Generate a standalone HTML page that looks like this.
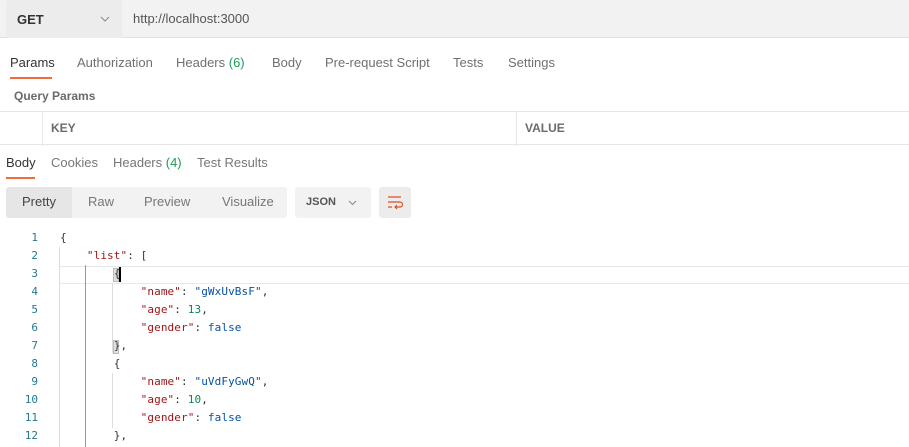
<!DOCTYPE html>
<html><head><meta charset="utf-8"><style>
*{margin:0;padding:0;box-sizing:border-box}
body{width:909px;height:447px;overflow:hidden;background:#fff;font-family:"Liberation Sans",sans-serif;font-size:13px;color:#6b6b6b;position:relative}
.a{position:absolute;white-space:nowrap}
.top{left:0;top:0;width:909px;height:38px;background:#f2f2f2;border-bottom:1px solid #e2e2e2}
.meth{left:6px;top:0;width:116px;height:38px;background:#ececec;border-radius:3px 0 0 3px}
.tab{top:55px;font-size:13px;color:#707070}
.code{font-family:"DejaVu Sans Mono","Liberation Mono",monospace;font-size:11px;line-height:18px;letter-spacing:0.1px}
.k{color:#a31515}.n{color:#098658}.b{color:#0451a5}
.ln{color:#237893;text-align:right;width:38px;left:0;letter-spacing:0}
</style></head><body>
<div class="a top"></div>
<div class="a meth"></div>
<div class="a" style="left:17px;top:12px;font-weight:bold;color:#333;font-size:13px">GET</div>
<svg class="a" style="left:100px;top:16px" width="10" height="6"><path d="M1 1L5 5L9 1" fill="none" stroke="#888" stroke-width="1"/></svg>
<div class="a" style="left:133px;top:11px;color:#555">http://localhost:3000</div>

<div class="a tab" style="left:10px;color:#333">Params</div>
<div class="a" style="left:10px;top:77px;width:42px;height:2px;background:#f26b3a"></div>
<div class="a tab" style="left:77px">Authorization</div>
<div class="a tab" style="left:176px">Headers <span style="color:#1a9e55">(6)</span></div>
<div class="a tab" style="left:272px">Body</div>
<div class="a tab" style="left:325px">Pre-request Script</div>
<div class="a tab" style="left:453px">Tests</div>
<div class="a tab" style="left:508px">Settings</div>

<div class="a" style="left:14px;top:89px;font-weight:bold;font-size:12px;color:#6b6b6b">Query Params</div>
<div class="a" style="left:0;top:111px;width:909px;height:1px;background:#e6e6e6"></div>
<div class="a" style="left:0;top:144px;width:909px;height:1px;background:#e6e6e6"></div>
<div class="a" style="left:42px;top:111px;width:1px;height:35px;background:#e6e6e6"></div>
<div class="a" style="left:516px;top:111px;width:1px;height:35px;background:#e6e6e6"></div>
<div class="a" style="left:51px;top:121px;font-size:12px;font-weight:bold;color:#6b6b6b">KEY</div>
<div class="a" style="left:525px;top:121px;font-size:12px;font-weight:bold;color:#6b6b6b">VALUE</div>

<div class="a" style="left:6px;top:155px;color:#333">Body</div>
<div class="a" style="left:6px;top:177px;width:29px;height:2px;background:#f26b3a"></div>
<div class="a" style="left:51px;top:155px;color:#777">Cookies</div>
<div class="a" style="left:113px;top:155px;color:#777">Headers <span style="color:#1a9e55">(4)</span></div>
<div class="a" style="left:197px;top:155px;color:#777">Test Results</div>

<div class="a" style="left:6px;top:187px;width:281px;height:31px;background:#f2f2f2;border-radius:3px"></div>
<div class="a" style="left:6px;top:187px;width:66px;height:31px;background:#e6e6e6;border-radius:3px 0 0 3px"></div>
<div class="a" style="left:22px;top:194px;color:#444">Pretty</div>
<div class="a" style="left:88px;top:194px;color:#777">Raw</div>
<div class="a" style="left:144px;top:194px;color:#777">Preview</div>
<div class="a" style="left:222px;top:194px;color:#777">Visualize</div>
<div class="a" style="left:295px;top:187px;width:76px;height:31px;background:#f2f2f2;border-radius:3px"></div>
<div class="a" style="left:306px;top:196px;font-size:11px;font-weight:bold;color:#555">JSON</div>
<svg class="a" style="left:348px;top:200px" width="9" height="6"><path d="M1 1L4.5 4.5L8 1" fill="none" stroke="#888" stroke-width="1"/></svg>
<div class="a" style="left:379px;top:187px;width:32px;height:31px;background:#ececec;border-radius:3px"></div>
<svg class="a" style="left:387px;top:195px" width="16" height="16"><path d="M1 2H14M1 7H13a2.5 2.5 0 0 1 0 5H8M10 10L8 12L10 14M1 12H5" fill="none" stroke="#e4501f" stroke-width="1.2"/></svg>

<div class="a" style="left:59px;top:266px;width:850px;height:18px;border-top:1px solid #e8e8e8;border-bottom:1px solid #e8e8e8"></div>
<div class="a" style="left:59px;top:247px;width:1px;height:200px;background:#ddd"></div>
<div class="a" style="left:85px;top:265px;width:1px;height:182px;background:#999"></div>
<div class="a" style="left:112px;top:283px;width:1px;height:70px;background:#ddd"></div>
<div class="a" style="left:112px;top:373px;width:1px;height:55px;background:#ddd"></div>
<div class="a" style="left:113px;top:268px;width:6px;height:14px;background:#e0e0e0;border:1px solid #bbb"></div>
<div class="a" style="left:119px;top:267px;width:2px;height:15px;background:#000"></div>
<div class="a" style="left:113px;top:340px;width:6px;height:14px;background:#e0e0e0;border:1px solid #bbb"></div>

<div class="a code ln" style="top:229px">1<br>2<br>3<br>4<br>5<br>6<br>7<br>8<br>9<br>10<br>11<br>12</div>
<div class="a code" style="left:60px;top:229px;color:#333;white-space:pre">{
    <span class="k">"list"</span>: [
        {
            <span class="k">"name"</span>: <span class="b">"gWxUvBsF"</span>,
            <span class="k">"age"</span>: <span class="n">13</span>,
            <span class="k">"gender"</span>: <span class="b">false</span>
        },
        {
            <span class="k">"name"</span>: <span class="b">"uVdFyGwQ"</span>,
            <span class="k">"age"</span>: <span class="n">10</span>,
            <span class="k">"gender"</span>: <span class="b">false</span>
        },</div>
</body></html>
